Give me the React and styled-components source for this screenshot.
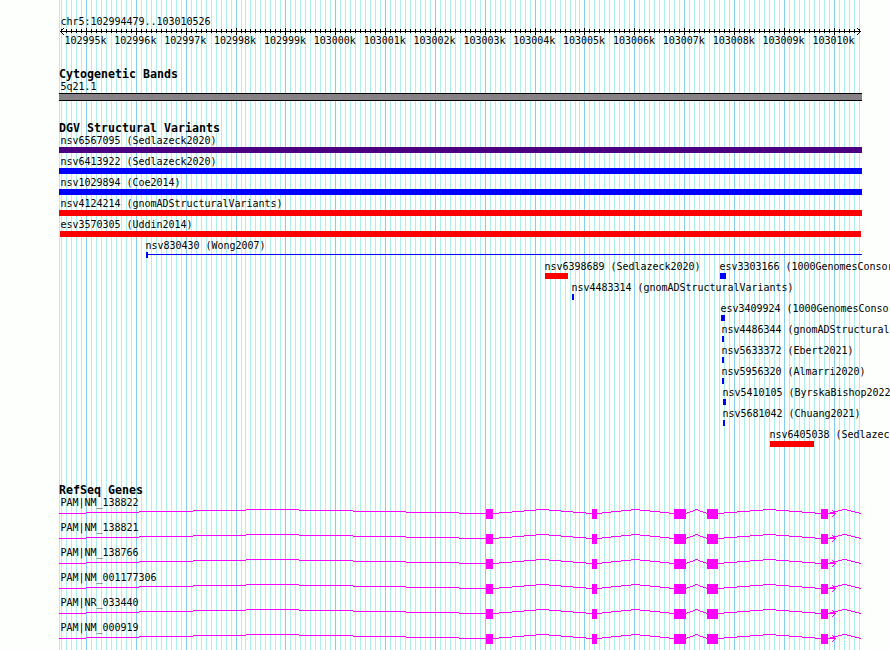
import React from "react";
import styled, { createGlobalStyle } from "styled-components";

const START = 102994479;
const SCALE = 800 / 16048;
const toX = (bp) => Math.round(60 + (bp - START) * SCALE);

const ticks = [];
for (let bp = 102994500; bp <= 103010500; bp += 100) {
  ticks.push({ x: toX(bp), major: bp % 1000 === 0, bp });
}
const majors = ticks.filter((t) => t.major);

const GlobalStyle = createGlobalStyle`
  body {
    margin: 0;
    background: #fdfffd;
    overflow: hidden;
  }
`;

const Browser = styled.main`
  position: relative;
  width: 890px;
  height: 650px;
  box-sizing: border-box;
  padding-top: 15px;
  overflow: hidden;
  color: #000;
  font: 10px/12px "DejaVu Sans Mono", monospace;
  letter-spacing: -0.02px;
  white-space: pre;
`;

const GridLines = styled.svg`
  position: absolute;
  inset: 0;
`;

const Content = styled.div`
  position: relative;
  display: flex;
  flex-direction: column;
`;

const Region = styled.div`
  height: 12px;
  padding-left: 60.4px;
  line-height: 14px;
`;

const Ruler = styled.svg`
  display: block;
  height: 8px;
  width: 890px;
`;

const Scale = styled.div`
  display: grid;
  grid-template-columns: repeat(16, 49.87px);
  height: 12px;
  padding-left: 64.5px;
`;

const Track = styled.section`
  display: flex;
  flex-direction: column;
  padding-top: ${(p) => p.$gap}px;
`;

const Heading = styled.h2`
  margin: 0;
  height: 12px;
  padding-left: 59px;
  font-size: 11.63px;
  line-height: 12px;
  font-weight: 700;
  letter-spacing: 0;
`;

const Label = styled.div`
  height: 12px;
  padding-left: ${(p) => p.$x + 0.4}px;
  line-height: 14px;
`;

const Band = styled.div`
  box-sizing: border-box;
  width: 803px;
  height: 8px;
  margin: 1px 0 0 59px;
  border: solid #000;
  border-width: 1px 0;
  background: #868286;
`;

const Feature = styled.div`
  display: flex;
  flex-direction: column;
  height: 21px;
`;

const FeaturePair = styled.div`
  display: grid;
  grid-template-columns: 710px 180px;
`;

const Bar = styled.div`
  width: ${(p) => p.$w}px;
  height: 6px;
  margin: 1px 0 0 ${(p) => p.$x}px;
  background: ${(p) => p.$color};
`;

const Span = styled.div`
  display: flex;
  width: 716px;
  height: 6px;
  margin: 1px 0 0 146px;
  background: linear-gradient(#00f, #00f) 0 2px / 100% 1px no-repeat;

  &::before {
    content: "";
    width: 2px;
    background: #00f;
  }
`;

const Gene = styled.div`
  height: 25px;
`;

const GeneModel = styled.svg`
  display: block;
  width: 890px;
  height: 13px;
`;

const variants = [
  ["nsv6567095 (Sedlazeck2020)", 60, 59, 803, "#4b0082"],
  ["nsv6413922 (Sedlazeck2020)", 60, 59, 803, "#00f"],
  ["nsv1029894 (Coe2014)", 60, 59, 803, "#00f"],
  ["nsv4124214 (gnomADStructuralVariants)", 60, 59, 803, "#f00"],
  ["esv3570305 (Uddin2014)", 60, 60, 801, "#f00"],
  ["nsv830430 (Wong2007)", 145, 0, 0, null],
  [
    ["nsv6398689 (Sedlazeck2020)", 544, 545, 23, "#f00"],
    ["esv3303166 (1000GenomesConsor", 719, 720, 6, "#00f"],
  ],
  ["nsv4483314 (gnomADStructuralVariants)", 571, 572, 2, "#00f"],
  ["esv3409924 (1000GenomesConsor", 720, 721, 4, "#00f"],
  ["nsv4486344 (gnomADStructural", 721, 722, 2, "#00f"],
  ["nsv5633372 (Ebert2021)", 721, 722, 2, "#00f"],
  ["nsv5956320 (Almarri2020)", 721, 722, 2, "#00f"],
  ["nsv5410105 (ByrskaBishop2022", 722, 723, 3, "#00f"],
  ["nsv5681042 (Chuang2021)", 722, 723, 2, "#00f"],
  ["nsv6405038 (Sedlazec", 769, 770, 44, "#f00"],
];

const genes = [
  "PAM|NM_138822",
  "PAM|NM_138821",
  "PAM|NM_138766",
  "PAM|NM_001177306",
  "PAM|NR_033440",
  "PAM|NM_000919",
];

const exons = [[486, 7], [592, 5], [674, 12], [707, 11], [821, 7]];
const introns = [[59.5, 486], [493, 592], [597, 674], [686, 707], [718, 821], [828, 861]];

// Each intron climbs four pixels to its midpoint and comes back down in whole-pixel steps.
const intronPath = ([a, b]) => {
  const half = (b - a) / 2;
  const up = [1, 3, 5, 7].map((n) => Math.round(a + (half * n) / 8));
  const down = [7, 5, 3, 1].map((n) => Math.round(b - (half * n) / 8));
  const stops = [Math.floor(a), ...up, ...down, b];
  const levels = [4, 3, 2, 1, 0, 1, 2, 3, 4];
  return levels
    .map((y, i) => `M${stops[i]} ${y}H${stops[i + 1]}V${y + 1}H${stops[i]}Z`)
    .join("");
};
const intronPaths = introns.map(intronPath).join("");

function Variant({ data, offset = 0 }) {
  const [name, labelX, x, w, color] = data;
  return (
    <Feature>
      <Label $x={labelX - offset}>{name}</Label>
      {color ? <Bar $x={x - offset} $w={w} $color={color} /> : <Span />}
    </Feature>
  );
}

export default function App() {
  return (
    <Browser>
      <GlobalStyle />
      <GridLines width="890" height="650" shapeRendering="crispEdges">
        <rect x="59" width="1" height="650" fill="#afeeee" />
        {ticks.map((t) => (
          <rect key={t.bp} x={t.x} width="1" height="650" fill={t.major ? "#87ceeb" : "#afeeee"} />
        ))}
      </GridLines>
      <Content>
        <Region>chr5:102994479..103010526</Region>
        <Ruler viewBox="0 27 890 8" shapeRendering="crispEdges">
          <rect x="60" y="31" width="801" height="1" />
          {ticks.map((t) => (
            <rect key={t.bp} x={t.x} y={t.major ? 28 : 29} width="1" height={t.major ? 7 : 4} />
          ))}
          <path d="M64 28L60.5 31.5L64 35M857 28L860.5 31.5L857 35" fill="none" stroke="#000" />
        </Ruler>
        <Scale>
          {majors.map((t) => (
            <span key={t.bp}>{t.bp / 1000}k</span>
          ))}
        </Scale>
        <Track $gap={21}>
          <Heading>Cytogenetic Bands</Heading>
          <Label $x={60}>5q21.1</Label>
          <Band />
        </Track>
        <Track $gap={21}>
          <Heading>DGV Structural Variants</Heading>
          {variants.map((v, i) =>
            Array.isArray(v[0]) ? (
              <FeaturePair key={i}>
                <Variant data={v[0]} />
                <Variant data={v[1]} offset={710} />
              </FeaturePair>
            ) : (
              <Variant key={i} data={v} />
            )
          )}
        </Track>
        <Track $gap={35}>
          <Heading>RefSeq Genes</Heading>
          {genes.map((g) => (
            <Gene key={g}>
              <Label $x={60}>{g}</Label>
              <GeneModel viewBox="0 -1 890 13" fill="#f0f" shapeRendering="crispEdges">
                <path d={intronPaths} />
                {exons.map(([x, w]) => (
                  <rect key={x} x={x} y="0" width={w} height="10" />
                ))}
                <path d="M828 4H836V5H828Z" />
                <path d="M832 1L835.5 4.5L832 8" fill="none" stroke="#f0f" />
              </GeneModel>
            </Gene>
          ))}
        </Track>
      </Content>
    </Browser>
  );
}
